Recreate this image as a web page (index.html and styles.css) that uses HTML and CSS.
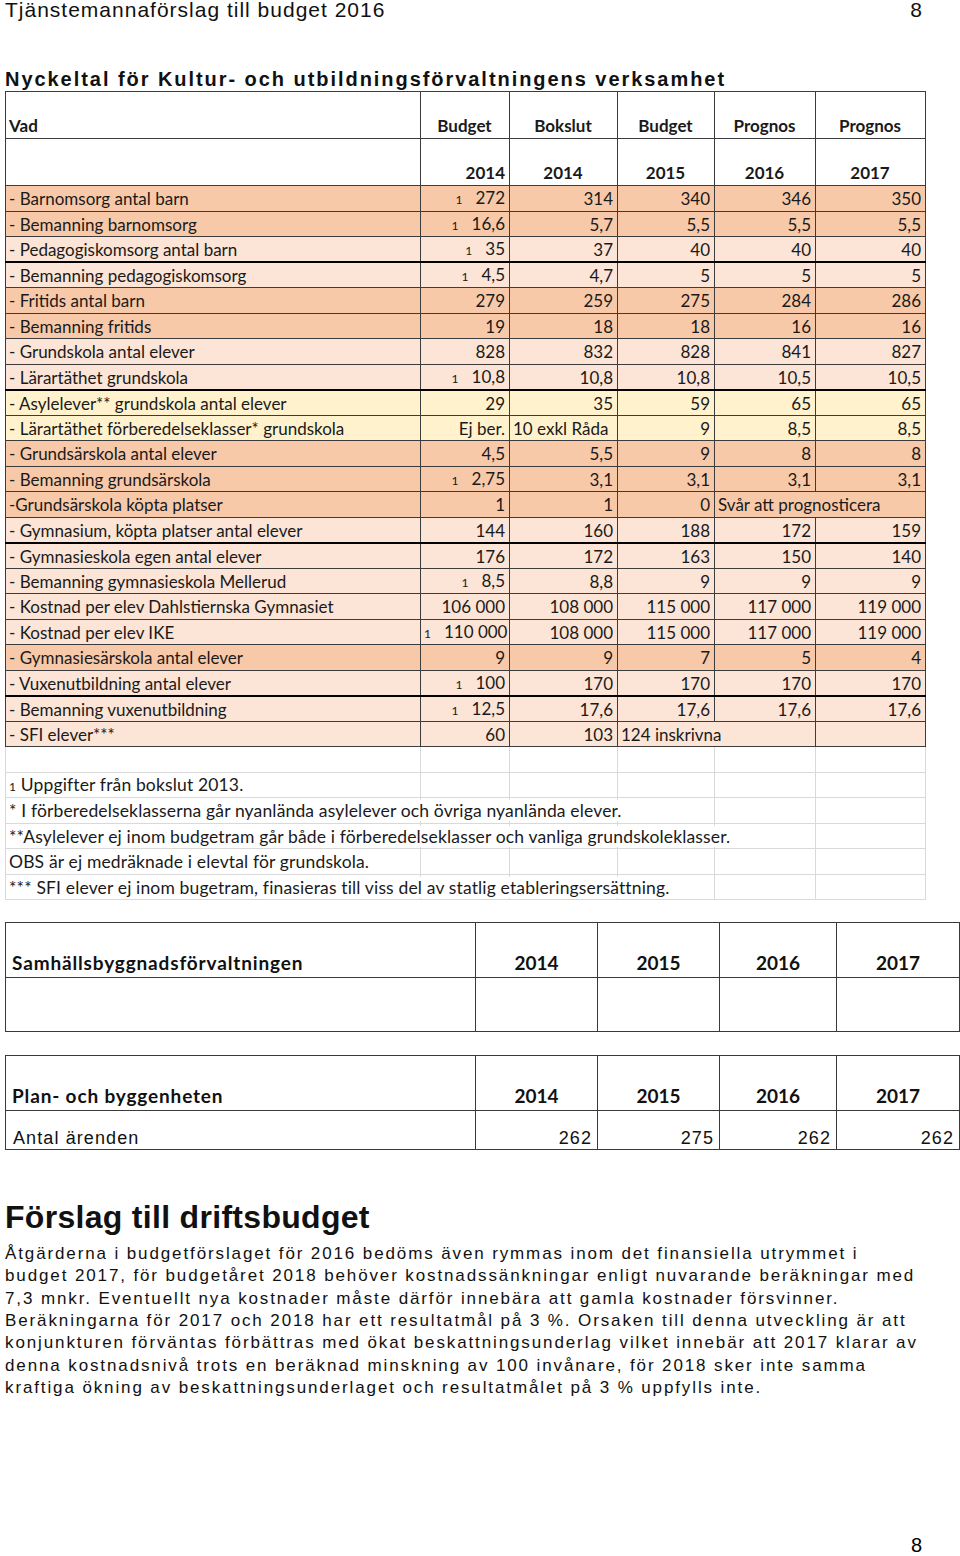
FILE: index.html
```html
<!DOCTYPE html>
<html lang="sv">
<head>
<meta charset="utf-8">
<title>Tjänstemannaförslag till budget 2016</title>
<link rel="stylesheet" href="styles.css">
</head>
<body>
<div class="page">
  <header class="top">
    <span>Tjänstemannaförslag till budget 2016</span>
    <span class="pno">8</span>
  </header>

  <h2 class="title">Nyckeltal för Kultur- och utbildningsförvaltningens verksamhet</h2>

  <table class="sheet">
    <colgroup>
      <col class="c-vad"><col class="c-1"><col class="c-2"><col class="c-3"><col class="c-4"><col class="c-5">
    </colgroup>
    <tr class="h">
      <th class="l">Vad</th><th>Budget</th><th>Bokslut</th><th>Budget</th><th>Prognos</th><th>Prognos</th>
    </tr>
    <tr class="h">
      <th></th><th class="r">2014</th><th>2014</th><th>2015</th><th>2016</th><th>2017</th>
    </tr>
    <tr class="dark"><td>- Barnomsorg antal barn</td><td class="n"><span class="fn">1</span>272</td><td class="n">314</td><td class="n">340</td><td class="n">346</td><td class="n">350</td></tr>
    <tr class="dark"><td>- Bemanning barnomsorg</td><td class="n"><span class="fn">1</span>16,6</td><td class="n">5,7</td><td class="n">5,5</td><td class="n">5,5</td><td class="n">5,5</td></tr>
    <tr class="light thick"><td>- Pedagogiskomsorg antal barn</td><td class="n"><span class="fn">1</span>35</td><td class="n">37</td><td class="n">40</td><td class="n">40</td><td class="n">40</td></tr>
    <tr class="light"><td>- Bemanning pedagogiskomsorg</td><td class="n"><span class="fn">1</span>4,5</td><td class="n">4,7</td><td class="n">5</td><td class="n">5</td><td class="n">5</td></tr>
    <tr class="dark"><td>- Fritids antal barn</td><td class="n">279</td><td class="n">259</td><td class="n">275</td><td class="n">284</td><td class="n">286</td></tr>
    <tr class="dark"><td>- Bemanning fritids</td><td class="n">19</td><td class="n">18</td><td class="n">18</td><td class="n">16</td><td class="n">16</td></tr>
    <tr class="light"><td>- Grundskola antal elever</td><td class="n">828</td><td class="n">832</td><td class="n">828</td><td class="n">841</td><td class="n">827</td></tr>
    <tr class="light thick"><td>- Lärartäthet grundskola</td><td class="n"><span class="fn">1</span>10,8</td><td class="n">10,8</td><td class="n">10,8</td><td class="n">10,5</td><td class="n">10,5</td></tr>
    <tr class="yellow"><td>- Asylelever** grundskola antal elever</td><td class="n">29</td><td class="n">35</td><td class="n">59</td><td class="n">65</td><td class="n">65</td></tr>
    <tr class="yellow"><td>- Lärartäthet förberedelseklasser* grundskola</td><td class="n">Ej ber.</td><td>10 exkl Råda</td><td class="n">9</td><td class="n">8,5</td><td class="n">8,5</td></tr>
    <tr class="dark"><td>- Grundsärskola antal elever</td><td class="n">4,5</td><td class="n">5,5</td><td class="n">9</td><td class="n">8</td><td class="n">8</td></tr>
    <tr class="dark"><td>- Bemanning grundsärskola</td><td class="n"><span class="fn">1</span>2,75</td><td class="n">3,1</td><td class="n">3,1</td><td class="n">3,1</td><td class="n">3,1</td></tr>
    <tr class="dark"><td>-Grundsärskola köpta platser</td><td class="n">1</td><td class="n">1</td><td class="n">0</td><td colspan="2">Svår att prognosticera</td></tr>
    <tr class="light thick"><td>- Gymnasium, köpta platser antal elever</td><td class="n">144</td><td class="n">160</td><td class="n">188</td><td class="n">172</td><td class="n">159</td></tr>
    <tr class="light"><td>- Gymnasieskola egen antal elever</td><td class="n">176</td><td class="n">172</td><td class="n">163</td><td class="n">150</td><td class="n">140</td></tr>
    <tr class="light"><td>- Bemanning gymnasieskola Mellerud</td><td class="n"><span class="fn">1</span>8,5</td><td class="n">8,8</td><td class="n">9</td><td class="n">9</td><td class="n">9</td></tr>
    <tr class="light"><td>- Kostnad per elev Dahlstiernska Gymnasiet</td><td class="n">106 000</td><td class="n">108 000</td><td class="n">115 000</td><td class="n">117 000</td><td class="n">119 000</td></tr>
    <tr class="light"><td>- Kostnad per elev IKE</td><td class="n"><span class="fn">1</span>110 000</td><td class="n">108 000</td><td class="n">115 000</td><td class="n">117 000</td><td class="n">119 000</td></tr>
    <tr class="dark"><td>- Gymnasiesärskola antal elever</td><td class="n">9</td><td class="n">9</td><td class="n">7</td><td class="n">5</td><td class="n">4</td></tr>
    <tr class="light thick"><td>- Vuxenutbildning antal elever</td><td class="n"><span class="fn">1</span>100</td><td class="n">170</td><td class="n">170</td><td class="n">170</td><td class="n">170</td></tr>
    <tr class="light"><td>- Bemanning vuxenutbildning</td><td class="n"><span class="fn">1</span>12,5</td><td class="n">17,6</td><td class="n">17,6</td><td class="n">17,6</td><td class="n">17,6</td></tr>
    <tr class="light"><td>- SFI elever***</td><td class="n">60</td><td class="n">103</td><td colspan="2">124 inskrivna</td><td></td></tr>
    <tr class="note"><td></td><td></td><td></td><td></td><td></td><td></td></tr>
    <tr class="note"><td><span class="ov"><span class="fn2">1</span> Uppgifter från bokslut 2013.</span></td><td></td><td></td><td></td><td></td><td></td></tr>
    <tr class="note"><td><span class="ov">* I förberedelseklasserna går nyanlända asylelever och övriga nyanlända elever.</span></td><td></td><td></td><td></td><td></td><td></td></tr>
    <tr class="note"><td><span class="ov">**Asylelever ej inom budgetram går både i förberedelseklasser och vanliga grundskoleklasser.</span></td><td></td><td></td><td></td><td></td><td></td></tr>
    <tr class="note"><td><span class="ov">OBS är ej medräknade i elevtal för grundskola.</span></td><td></td><td></td><td></td><td></td><td></td></tr>
    <tr class="note"><td><span class="ov">*** SFI elever ej inom bugetram, finasieras till viss del av statlig etableringsersättning.</span></td><td></td><td></td><td></td><td></td><td></td></tr>
  </table>

  <table class="unit">
    <colgroup><col class="u-0"><col class="u-1"><col class="u-2"><col class="u-3"><col class="u-4"></colgroup>
    <tr class="uh"><th class="l">Samhällsbyggnadsförvaltningen</th><th>2014</th><th>2015</th><th>2016</th><th>2017</th></tr>
    <tr class="ub"><td></td><td></td><td></td><td></td><td></td></tr>
  </table>

  <table class="unit unit2">
    <colgroup><col class="u-0"><col class="u-1"><col class="u-2"><col class="u-3"><col class="u-4"></colgroup>
    <tr class="uh"><th class="l">Plan- och byggenheten</th><th>2014</th><th>2015</th><th>2016</th><th>2017</th></tr>
    <tr class="ud"><td class="lbl">Antal ärenden</td><td class="n">262</td><td class="n">275</td><td class="n">262</td><td class="n">262</td></tr>
  </table>

  <h1 class="heading">Förslag till driftsbudget</h1>
  <p class="body">Åtgärderna i budgetförslaget för 2016 bedöms även rymmas inom det finansiella utrymmet i<br>budget 2017, för budgetåret 2018 behöver kostnadssänkningar enligt nuvarande beräkningar med<br>7,3 mnkr. Eventuellt nya kostnader måste därför innebära att gamla kostnader försvinner.<br>Beräkningarna för 2017 och 2018 har ett resultatmål på 3 %. Orsaken till denna utveckling är att<br>konjunkturen förväntas förbättras med ökat beskattningsunderlag vilket innebär att 2017 klarar av<br>denna kostnadsnivå trots en beräknad minskning av 100 invånare, för 2018 sker inte samma<br>kraftiga ökning av beskattningsunderlaget och resultatmålet på 3 % uppfylls inte.</p>

  <footer class="foot">8</footer>
</div>
</body>
</html>
```

FILE: styles.css
```css
html, body {
  margin: 0;
  padding: 0;
  background: #fff;
}

.page {
  width: 960px;
  height: 1556px;
  padding-left: 5px;
  box-sizing: border-box;
  color: #000;
  font-family: "Liberation Sans", Arial, sans-serif;
  display: flex;
  flex-direction: column;
}

.top {
  display: flex;
  justify-content: space-between;
  font-size: 21px;
  line-height: 20px;
  height: 20px;
  letter-spacing: 1px;
  padding-right: 37px;
  color: #111;
}

.title {
  margin: 48px 0 0 0;
  font-size: 20px;
  line-height: 23px;
  font-weight: bold;
  letter-spacing: 1.95px;
  color: #111;
}

/* ---------- spreadsheet table ---------- */
.sheet {
  margin-top: 0;
  width: 920px;
  table-layout: fixed;
  border-collapse: collapse;
  font-family: Lato, "Open Sans", sans-serif;
  font-size: 17px;
  color: #1a1a1a;
}

.c-vad { width: 415px; }
.c-1 { width: 89px; }
.c-2 { width: 108px; }
.c-3 { width: 97px; }
.c-4 { width: 101px; }
.c-5 { width: 110px; }

.sheet th,
.sheet td {
  border: 1px solid #3c3c3c;
  padding: 0 4px 0 3px;
  white-space: nowrap;
  overflow: visible;
  line-height: 20px;
}

.sheet tr.h { height: 47px; }
.sheet tr.h th {
  vertical-align: bottom;
  padding-bottom: 2px;
  font-weight: bold;
  text-align: center;
  background: #fff;
}
.sheet tr.h th.l { text-align: left; }
.sheet tr.h th.r { text-align: right; }

.sheet tr.dark,
.sheet tr.light,
.sheet tr.yellow { height: 25.5px; }
.sheet tr td { padding-top: 2px; }

.sheet tr.dark td { background: #f8c9a9; }
.sheet tr.light td { background: #fce4d6; }
.sheet tr.yellow td { background: #fff2cc; }

.sheet tr.thick td { border-bottom: 2px solid #000; }

.sheet td.n { text-align: right; }

.fn {
  font-size: 12px;
  margin-right: 13px;
}

.sheet tr.note { height: 25.5px; }
.sheet tr.note td {
  border-color: #d9d9d9;
  background: #fff;
  position: relative;
}

.ov {
  position: relative;
  z-index: 1;
  background: #fff;
  font-size: 17.5px;
  letter-spacing: 0.15px;
  padding-right: 2px;
  color: #1a1a1a;
}

.fn2 { font-size: 12px; }

/* ---------- unit tables ---------- */
.unit {
  margin-top: 22px;
  width: 954px;
  table-layout: fixed;
  border-collapse: collapse;
  font-family: Lato, sans-serif;
  color: #111;
}
.unit2 { margin-top: 23px; }

.u-0 { width: 470px; }
.u-1 { width: 122px; }
.u-2 { width: 122px; }
.u-3 { width: 117px; }
.u-4 { width: 123px; }

.unit th,
.unit td {
  border: 1px solid #3a3a3a;
  padding: 0 6px;
}

.unit tr.uh { height: 55px; }
.unit tr.uh th {
  vertical-align: bottom;
  padding-bottom: 3px;
  font-size: 19px;
  font-weight: bold;
  text-align: center;
}
.unit tr.uh th.l {
  text-align: left;
  letter-spacing: 0.85px;
}

.unit tr.ub { height: 54px; }
.unit tr.ud { height: 39px; }
.unit tr.ud td {
  vertical-align: bottom;
  padding-bottom: 0;
  font-family: "Liberation Sans", Arial, sans-serif;
  font-size: 18px;
  letter-spacing: 1.1px;
}
.unit td.lbl { padding-left: 7px; }
.unit td.n { text-align: right; padding-right: 5px; }

/* ---------- text ---------- */
.heading {
  margin: 49px 0 0 0;
  font-size: 32px;
  line-height: 36px;
  letter-spacing: 0.3px;
  font-weight: bold;
  color: #111;
}

.body {
  margin: 8px 0 0 0;
  font-size: 17px;
  line-height: 22.35px;
  letter-spacing: 1.88px;
  color: #111;
}

.foot {
  margin-top: auto;
  align-self: flex-end;
  margin-right: 38px;
  font-size: 20px;
  line-height: 20px;
  margin-bottom: 1px;
}
```
